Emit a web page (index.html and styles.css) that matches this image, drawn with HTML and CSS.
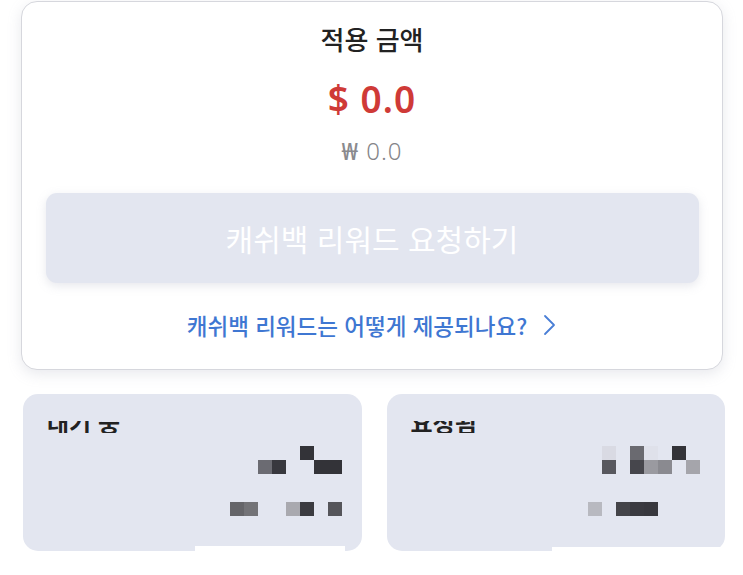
FILE: index.html
```html
<!DOCTYPE html>
<html lang="ko">
<head>
<meta charset="utf-8">
<link rel="stylesheet" href="styles.css">
</head>
<body>
<div class="page">
  <section class="summary">
    <h1 class="title">적용 금액</h1>
    <div class="usd">$ 0.0</div>
    <div class="krw"><span class="won">₩</span> 0.0</div>
    <button class="request" type="button">캐쉬백 리워드 요청하기</button>
    <a class="help" href="#">캐쉬백 리워드는 어떻게 제공되나요?
      <svg class="chev" width="14" height="22" viewBox="0 0 14 22"><path d="M2 2 L11 11 L2 20" fill="none" stroke="#4a7fd6" stroke-width="1.8" stroke-linecap="round" stroke-linejoin="round"/></svg>
    </a>
  </section>
  <div class="stats">
    <div class="stat">
      <div class="stat-label"><span>대기 중</span></div>
      <div class="pix">
        <i></i><i></i><i></i><i></i><i></i><i class="c333"></i><i></i><i></i>
        <i></i><i></i><i class="c6b"></i><i class="c38"></i><i></i><i></i><i class="c333"></i><i class="c333"></i>
        <i></i><i></i><i></i><i></i><i></i><i></i><i></i><i></i>
        <i></i><i></i><i></i><i></i><i></i><i></i><i></i><i></i>
        <i class="c65"></i><i class="c70"></i><i></i><i></i><i class="ca9"></i><i class="c3b"></i><i></i><i class="c55"></i>
      </div>
      <div class="smudge smudge-left"></div>
    </div>
    <div class="stat">
      <div class="stat-label"><span>요청됨</span></div>
      <div class="pix pix-right">
        <i></i><i class="cdc"></i><i></i><i class="c6a"></i><i class="ce0"></i><i></i><i class="c333"></i><i></i>
        <i></i><i class="c58"></i><i></i><i class="c46"></i><i class="c9a"></i><i class="c8a"></i><i></i><i class="ca5"></i>
        <i></i><i></i><i></i><i></i><i></i><i></i><i></i><i></i>
        <i></i><i></i><i></i><i></i><i></i><i></i><i></i><i></i>
        <i class="cb8"></i><i></i><i class="c44"></i><i class="c3a"></i><i class="c38"></i><i></i><i></i><i></i>
      </div>
      <div class="smudge smudge-right"></div>
    </div>
  </div>
</div>
</body>
</html>
```

FILE: styles.css
```css
* { box-sizing: border-box; }
html, body {
  margin: 0;
  padding: 0;
  background: #ffffff;
  font-family: "Noto Sans CJK KR", "Noto Sans", sans-serif;
}
.page {
  width: 743px;
  height: 575px;
  overflow: hidden;
  padding-top: 1px;
}
.summary {
  margin-left: 21px;
  width: 702px;
  height: 369px;
  background: #fff;
  border: 1px solid #d6d7dd;
  border-radius: 16px;
  box-shadow: 0 4px 14px rgba(150, 155, 175, 0.22);
  display: flex;
  flex-direction: column;
  align-items: center;
}
.title {
  margin: 19px 0 0;
  font-size: 26px;
  line-height: 36px;
  font-weight: 500;
  color: #222;
}
.usd {
  margin-top: 19px;
  font-family: "Noto Sans", sans-serif;
  font-size: 37px;
  line-height: 46px;
  font-weight: 600;
  color: #cf3a37;
  letter-spacing: 1px;
}
.krw {
  margin-top: 14px;
  font-family: "Noto Sans", sans-serif;
  font-size: 24px;
  line-height: 30px;
  font-weight: 300;
  color: #858589;
  letter-spacing: 1px;
}
.won { font-weight: 500; color: #8a8a8e; }
.request {
  margin-top: 27px;
  width: 653px;
  height: 90px;
  border: none;
  border-radius: 11px;
  background: #e3e6f0;
  box-shadow: 0 3px 10px rgba(160, 165, 185, 0.25);
  color: #ffffff;
  font-family: "Noto Sans CJK KR", sans-serif;
  font-size: 30px;
  font-weight: 400;
}
.help {
  margin-top: 27px;
  display: flex;
  align-items: center;
  gap: 16px;
  color: #3f77d2;
  text-decoration: none;
  font-size: 22.5px;
  line-height: 30px;
  font-weight: 500;
}
.chev { display: block; }
.stats {
  margin-top: 24px;
  margin-left: 23px;
  width: 702px;
  display: flex;
  gap: 25px;
}
.stat {
  position: relative;
  flex: 1;
  height: 157px;
  background: #e3e6f0;
  border-radius: 15px;
  padding: 27px 0 0 24px;
}
.stat-label {
  height: 12px;
  overflow: hidden;
  font-size: 24px;
  font-weight: 700;
  color: #222;
}
.stat-label span {
  display: block;
  line-height: 24px;
  margin-top: -11px;
}
.pix {
  margin: 13px 0 0 183px;
  display: grid;
  grid-template-columns: repeat(8, 14px);
  grid-template-rows: repeat(5, 14px);
}
.pix-right { margin-left: 177px; }
.pix i { display: block; }
.c333 { background: #333338; }
.c6b { background: #6b6b72; }
.c38 { background: #38383e; }
.c65 { background: #656569; }
.c70 { background: #737377; }
.ca9 { background: #a9a9af; }
.c3b { background: #3b3b40; }
.c55 { background: #55555a; }
.cdc { background: #d9dae3; }
.c6a { background: #6a6a70; }
.ce0 { background: #dfe1ea; }
.c58 { background: #58585e; }
.c46 { background: #46464c; }
.c9a { background: #9a9aa0; }
.c8a { background: #8a8a90; }
.ca5 { background: #a5a5ab; }
.cb8 { background: #b8b9c0; }
.c44 { background: #444449; }
.c3a { background: #3a3a40; }
.smudge {
  position: absolute;
  bottom: -3px;
  height: 8px;
  background: #ffffff;
}
.smudge-left { left: 172px; width: 150px; }
.smudge-right { left: 165px; width: 175px; bottom: -1px; height: 5px; }
```
